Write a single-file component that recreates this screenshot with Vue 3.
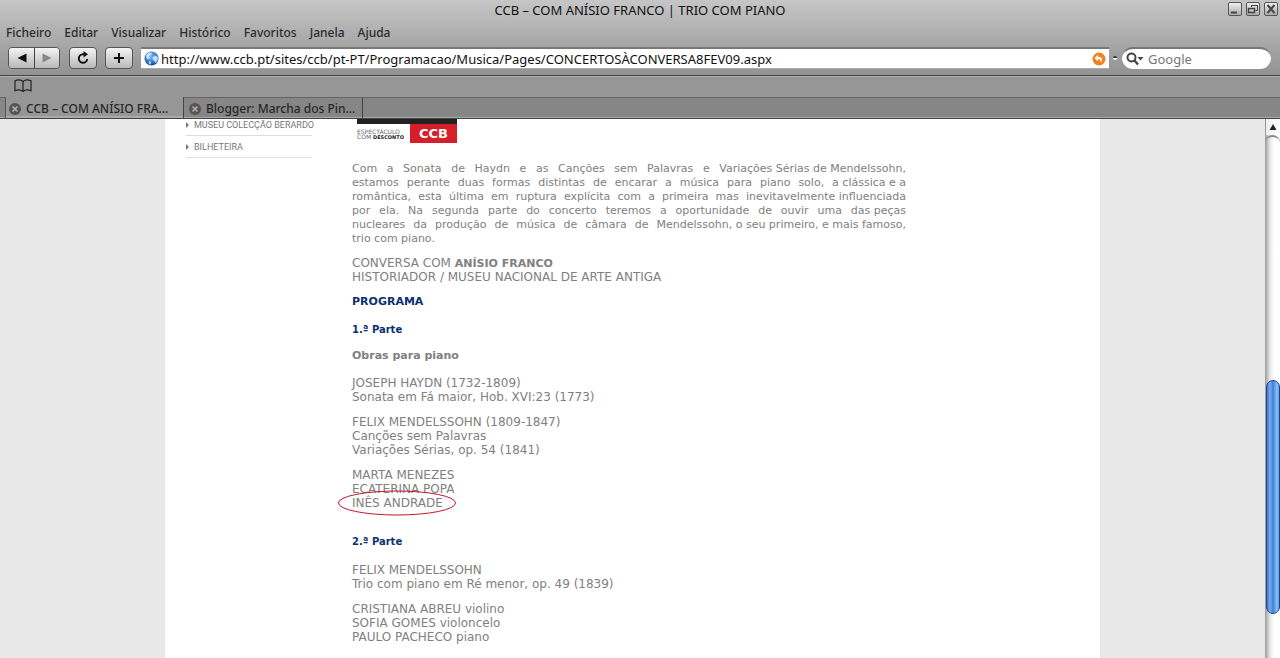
<template>
  <div class="browser">
    <header class="chrome">
      <div class="titlebar">
        <h1 class="title">CCB – COM ANÍSIO FRANCO | TRIO COM PIANO</h1>
        <div class="win-btns">
          <button type="button" class="win-btn" aria-label="Minimizar">
            <svg width="14" height="14" viewBox="0 0 14 14"><path d="M3 10.500h6" stroke="#444" stroke-width="2" /></svg>
          </button>
          <button type="button" class="win-btn" aria-label="Restaurar">
            <svg width="14" height="14" viewBox="0 0 14 14" fill="none" stroke="#444">
              <path d="M5.500 5V3.500H11.500V8.500H9.500M5 3.500h7" />
              <path d="M2.500 6.500h6v4h-6zM2 6.500h7" stroke-width="1.500" />
            </svg>
          </button>
          <button type="button" class="win-btn" aria-label="Fechar">
            <svg width="14" height="14" viewBox="0 0 14 14"><path d="M3.500 3l7 8M10.500 3l-7 8" stroke="#444" stroke-width="2" /></svg>
          </button>
        </div>
      </div>

      <nav class="menubar">
        <button v-for="m in menus" :key="m" type="button" class="menu">{{ m }}</button>
      </nav>

      <div class="toolbar">
        <div class="nav-group">
          <button type="button" class="tool" aria-label="Anterior">
            <svg width="12" height="12" viewBox="0 0 12 12"><path d="M10.500 1.500v9L1.500 6z" fill="#111" /></svg>
          </button>
          <button type="button" class="tool" aria-label="Seguinte">
            <svg width="12" height="12" viewBox="0 0 12 12"><path d="M1.500 1.500v9l9-4.500z" fill="#888" /></svg>
          </button>
        </div>
        <button type="button" class="tool single" aria-label="Recarregar">
          <svg width="14" height="14" viewBox="0 0 14 14">
            <path d="M8.500 3.300H7A4.200 4.200 0 1 0 11.200 8" fill="none" stroke="#111" stroke-width="2" />
            <path d="M7.500 0v6.600l4.500-3.300z" fill="#111" />
          </svg>
        </button>
        <button type="button" class="tool single" aria-label="Adicionar marcador">
          <svg width="12" height="12" viewBox="0 0 12 12"><path d="M6 1v10M1 6h10" stroke="#111" stroke-width="2" /></svg>
        </button>
        <div class="address">
          <svg width="15" height="15" viewBox="0 0 15 15">
            <defs>
              <radialGradient id="globe" cx="45%" cy="35%" r="65%">
                <stop offset="0" stop-color="#7dbcf2" />
                <stop offset="0.600" stop-color="#3d80cf" />
                <stop offset="1" stop-color="#1c4690" />
              </radialGradient>
            </defs>
            <circle cx="7.500" cy="7.500" r="7" fill="url(#globe)" />
            <path d="M2 4l3-2.500 3 .5-1 2-2 1 1 2-2 1.500L2.500 7zM9 6l3-1.500 2 2-.5 3-2 2.500-1.500-2.500L8.500 8zM5 10l2 1-.5 2.500L5 13z" fill="#d9efff" opacity="0.850" />
          </svg>
          <input v-model="url" class="url" type="text" aria-label="Endereço" />
          <button type="button" class="snap" aria-label="SnapBack">
            <svg width="14" height="14" viewBox="0 0 14 14">
              <circle cx="7" cy="7" r="6.500" fill="#f5821f" />
              <path d="M6 2.800L2.500 6 6 9.200V7.300c2.200-.3 3 .7 2.300 3.200C11.500 7.700 10 4.700 6 4.800z" fill="#fff" />
            </svg>
          </button>
        </div>
        <span class="dot"></span>
        <label class="search">
          <svg width="18" height="14" viewBox="0 0 18 14">
            <circle cx="5.500" cy="5.500" r="4" fill="none" stroke="#444" stroke-width="2" />
            <path d="M8.500 8.500l3.500 4" stroke="#444" stroke-width="2.400" />
            <path d="M11.500 5h6l-3 3.500z" fill="#444" />
          </svg>
          <input v-model="query" type="search" placeholder="Google" aria-label="Google" />
        </label>
      </div>

      <div class="bookmarks">
        <button type="button" class="book" aria-label="Marcadores">
          <svg width="18" height="14" viewBox="0 0 18 14" fill="none" stroke="#222" stroke-width="1.200">
            <path d="M9 2.500C7 .8 3.500.8 1 1.800v10c2.500-1 6-1 8 .7 2-1.700 5.500-1.700 8-.7v-10C14.500.8 11 .8 9 2.500zM9 2.500v10" />
          </svg>
        </button>
      </div>

      <div class="tabs">
        <button
          v-for="(t, i) in tabs"
          :key="t"
          type="button"
          class="tab"
          :class="{ active: i === current }"
          @click="current = i"
        >
          <svg width="12" height="12" viewBox="0 0 12 12">
            <circle cx="6" cy="6" r="6" fill="#555" />
            <path d="M3.500 3.500l5 5M8.500 3.500l-5 5" stroke="#b4b4b4" stroke-width="1.600" />
          </svg>
          <span>{{ t }}</span>
        </button>
      </div>
    </header>

    <div class="viewport">
      <main class="canvas">
        <div class="page">
          <aside class="side">
            <ul>
              <li v-for="s in sideLinks" :key="s"><a href="#">{{ s }}</a></li>
            </ul>
          </aside>

          <article class="article">
            <div class="badge">
              <div class="badge-text">ESPECTÁCULO<br />COM <b>DESCONTO</b></div>
              <div class="badge-ccb">CCB</div>
            </div>

            <p class="intro">
              <span v-for="l in intro" :key="l[0]" class="line">{{ l[0] }} <span class="keep">{{ l[1] }}</span></span>
              <span class="last">trio com piano.</span>
            </p>
            <p>CONVERSA COM <b>ANÍSIO FRANCO</b><br />HISTORIADOR / MUSEU NACIONAL DE ARTE ANTIGA</p>
            <h2>PROGRAMA</h2>
            <h3>1.ª Parte</h3>
            <p><b>Obras para piano</b></p>
            <p class="first">JOSEPH HAYDN (1732-1809)<br />Sonata em Fá maior, Hob. XVI:23 (1773)</p>
            <p>FELIX MENDELSSOHN (1809-1847)<br />Canções sem Palavras<br />Variações Sérias, op. 54 (1841)</p>
            <p>
              MARTA MENEZES<br />ECATERINA POPA<br />
              <span class="marked">INÊS ANDRADE
                <svg class="ring" width="120" height="26" viewBox="0 0 120 26">
                  <ellipse cx="59" cy="13" rx="58.500" ry="12" fill="none" stroke="#c4142c" />
                </svg>
              </span>
            </p>
            <h3 class="second">2.ª Parte</h3>
            <p class="first">FELIX MENDELSSOHN<br />Trio com piano em Ré menor, op. 49 (1839)</p>
            <p>CRISTIANA ABREU violino<br />SOFIA GOMES violoncelo<br />PAULO PACHECO piano</p>
          </article>
        </div>
      </main>

      <div class="scrollbar">
        <button type="button" class="up" aria-label="Subir">
          <svg width="8" height="8" viewBox="0 0 8 8"><path d="M4 1l3.500 6h-7z" fill="#222" /></svg>
        </button>
        <div class="track">
          <div class="thumb" :style="{ top: thumb.top + '%', height: thumb.height + '%' }"></div>
        </div>
      </div>
    </div>
  </div>
</template>

<script setup>
import { ref } from "vue";

const menus = ["Ficheiro", "Editar", "Visualizar", "Histórico", "Favoritos", "Janela", "Ajuda"];
const tabs = ["CCB – COM ANÍSIO FRA...", "Blogger: Marcha dos Pin..."];
const sideLinks = ["MUSEU COLECÇÃO BERARDO", "BILHETEIRA"];
const current = ref(0);
const query = ref("");
const url = ref("http://www.ccb.pt/sites/ccb/pt-PT/Programacao/Musica/Pages/CONCERTOSÀCONVERSA8FEV09.aspx");

// cada linha: parte justificada + parte com espaços fixos
const intro = [
  ["Com a Sonata de Haydn e as Canções sem Palavras e", "Variações Sérias de Mendelssohn,"],
  ["estamos perante duas formas distintas de encarar a música para piano solo,", "a clássica e a"],
  ["romântica, esta última em ruptura explícita com a primeira mas", "inevitavelmente influenciada"],
  ["por ela. Na segunda parte do concerto teremos a oportunidade de ouvir uma", "das peças"],
  ["nucleares da produção de música de câmara de", "Mendelssohn, o seu primeiro, e mais famoso,"],
];

const thumb = { top: 46.6, height: 45 };
</script>

<style>
body {
  margin: 0;
}
</style>

<style scoped>
.browser {
  display: flex;
  flex-direction: column;
  min-height: 100vh;
  font-family: "Noto Sans", "Open Sans", sans-serif;
  color: #111;
}
button,
input {
  font: inherit;
  color: inherit;
  margin: 0;
  padding: 0;
  border: 0;
  background: none;
}
svg {
  display: block;
  flex: none;
}

.chrome {
  background: linear-gradient(#c6c6c6, #929292 75px, #969696 76px);
}
.titlebar {
  display: grid;
  grid-template-columns: 1fr auto 1fr;
  height: 23px;
}
.title {
  grid-column: 2;
  margin: 0;
  font-size: 13px;
  font-weight: 400;
  line-height: 20px;
}
.win-btns {
  display: flex;
  justify-content: flex-end;
  gap: 4px;
  padding: 2px 2px 0 0;
}
.win-btn {
  box-sizing: border-box;
  width: 14px;
  height: 14px;
  border: 1px solid #555;
  border-radius: 2px;
  background: linear-gradient(#eee, #aaa);
  display: flex;
  align-items: center;
  justify-content: center;
}

.menubar {
  display: flex;
  align-items: flex-start;
  gap: 13px;
  padding-left: 6px;
  height: 21px;
}
.menu {
  font-size: 12px;
  font-weight: 500;
  line-height: 20px;
  color: #2b2b2b;
}

.toolbar {
  display: flex;
  align-items: center;
  box-sizing: border-box;
  height: 32px;
  padding: 0 9px 3px 8px;
  border-bottom: 1px solid #444;
}
.nav-group {
  display: flex;
  border: 1px solid #555;
  border-radius: 4px;
  overflow: hidden;
}
.tool {
  width: 25px;
  height: 20px;
  background: linear-gradient(#f4f4f4, #b8b8b8);
  display: flex;
  align-items: center;
  justify-content: center;
}
.tool + .tool {
  border-left: 1px solid #444;
}
.nav-group + .single,
.single + .single {
  box-sizing: content-box;
  width: 26px;
  margin-left: 8px;
  border: 1px solid #555;
  border-radius: 4px;
}
.nav-group + .single {
  margin-left: 9px;
}
.address {
  flex: 1;
  display: flex;
  align-items: center;
  box-sizing: border-box;
  height: 22px;
  margin-left: 8px;
  padding: 0 3px;
  background: #fff;
  border-top: 2px solid #777;
  border-bottom: 1px solid #aaa;
}
.url {
  flex: 1;
  min-width: 0;
  height: 18px;
  padding-left: 2px;
  font-size: 13px;
}
.dot {
  width: 4px;
  height: 4px;
  margin: 0 5px 0 4px;
  border-radius: 50%;
  background: linear-gradient(#333 50%, #fff 50%);
}
.search {
  display: flex;
  align-items: center;
  box-sizing: border-box;
  width: 149px;
  height: 22px;
  padding-left: 4px;
  border-top: 2px solid #777;
  border-radius: 11px;
  background: #fff;
}
.search input {
  flex: 1;
  min-width: 0;
  padding-left: 4px;
  font-size: 13px;
  outline: none;
  appearance: none;
}
.search input::placeholder {
  color: #777;
  opacity: 1;
}

.bookmarks {
  display: flex;
  align-items: flex-start;
  box-sizing: border-box;
  height: 22px;
  padding: 2px 0 0 14px;
  border-top: 1px solid #b4b4b4;
  border-bottom: 1px solid #666;
  background: #969696;
}
.tabs {
  display: flex;
  box-sizing: border-box;
  height: 21px;
  padding-left: 5px;
  background: #868686;
  border-bottom: 1px solid #444;
  box-shadow: inset 0 -1px #aaa;
}
.tab {
  display: flex;
  align-items: center;
  gap: 5px;
  box-sizing: border-box;
  width: 179px;
  padding: 1px 5px 0;
  border-right: 1px solid #444;
  font-size: 12px;
  font-weight: 500;
  line-height: 18px;
  white-space: nowrap;
  color: #262626;
}
.tab.active {
  margin-top: -1px;
  padding-left: 3px;
  padding-top: 2px;
  background: #969696;
  border-left: 1px solid #555;
  box-shadow: inset 0 -2px #aaa;
}

.viewport {
  flex: 1;
  display: flex;
}
.canvas {
  flex: 1;
  background: #e8e8e8;
  display: flex;
}
.page {
  display: flex;
  box-sizing: border-box;
  width: 100%;
  max-width: 935px;
  margin: 0 auto;
  padding: 0 20px 12px 21px;
  background: #fff;
  font-family: "DejaVu Sans", Verdana, sans-serif;
  font-size: 12px;
  line-height: 14px;
  color: #808080;
}
.side {
  flex: none;
  width: 126px;
  margin-right: 40px;
  font-family: Roboto, "Liberation Sans", sans-serif;
  font-size: 9px;
}
.side ul {
  list-style: none;
  margin: -5px 0 0;
  padding: 0;
}
.side li {
  display: flex;
  align-items: center;
  gap: 5px;
  height: 21px;
  border-bottom: 1px solid #ddd;
}
.side li::before {
  content: "";
  border: 3px solid transparent;
  border-left-color: #777;
  border-right-width: 0;
}
.side a {
  color: #777;
  text-decoration: none;
  white-space: nowrap;
}

.article {
  flex: 0 1 554px;
}
.article p,
.article h2,
.article h3 {
  margin: 11px 0 0;
}
.article h2,
.article h3 {
  color: #0a3070;
}
.article b,
.article h2 {
  font-size: 11px;
}
.article b {
  line-height: 1;
}
.article h3 {
  font-size: 10px;
}
.article h2 + h3,
.article .first {
  margin-top: 14px;
}
.article .second {
  margin-top: 25px;
}
.badge {
  display: flex;
  box-sizing: border-box;
  width: 100px;
  height: 24px;
  margin-left: 5px;
  border-top: 5px solid #222;
}
.badge-text {
  flex: 1;
  padding-top: 5px;
  font-size: 6px;
  line-height: 5px;
  white-space: nowrap;
  color: #666;
}
.article .badge-text b {
  font-size: 5px;
  color: #222;
}
.badge-ccb {
  width: 47px;
  background: #d71f2b;
  color: #fff;
  font-size: 13px;
  font-weight: 700;
  line-height: 19px;
  text-align: center;
}
.article .intro {
  margin-top: 19px;
  font-size: 11px;
}
.article .intro + p {
  margin-top: 10px;
}
.line {
  display: block;
  text-align: justify;
  text-align-last: justify;
}
.keep {
  display: inline-block;
  text-align-last: left;
  white-space: nowrap;
}
.last {
  display: block;
}
.marked {
  position: relative;
}
.ring {
  position: absolute;
  left: -14px;
  top: -6px;
}

.scrollbar {
  display: flex;
  flex-direction: column;
  width: 15px;
  background: linear-gradient(90deg, #999, #e8e8e8 5px, #fff 9px);
}
.up {
  display: flex;
  align-items: center;
  justify-content: center;
  height: 16px;
  border-left: 1px solid #999;
  background: linear-gradient(90deg, #eee, #fff);
}
.track {
  position: relative;
  flex: 1;
  border-top: 2px solid #888;
  border-radius: 8px 8px 0 0;
}
.thumb {
  position: absolute;
  left: 1px;
  box-sizing: border-box;
  width: 14px;
  border: 1px solid #22408c;
  border-radius: 7px;
  background: linear-gradient(90deg, #4472c4, #7aacec 3px, #3a80dc 6px, #8cc4f6 10px, #5a9ae0);
}
</style>
